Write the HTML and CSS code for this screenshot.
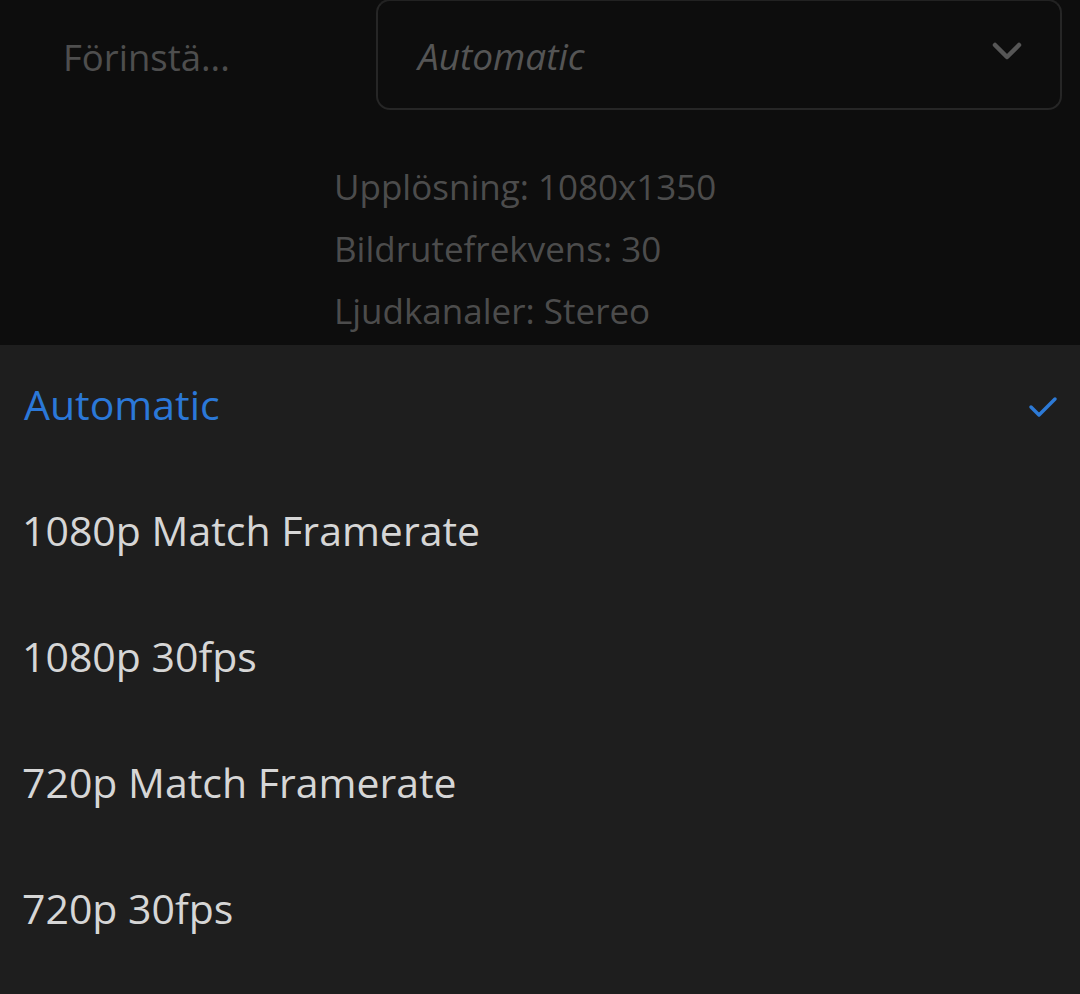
FILE: index.html
```html
<!DOCTYPE html>
<html lang="sv">
<head>
<meta charset="utf-8">
<link rel="stylesheet" href="styles.css">
</head>
<body>
<div class="screen">
  <section class="top">
    <div class="preset-row">
      <div class="preset-label">Förinstä...</div>
      <div class="select">
        <span class="select-value">Automatic</span>
        <svg class="chevron" width="30" height="20" viewBox="0 0 30 20"><path d="M3 3 L15 15 L27 3" fill="none" stroke="#565656" stroke-width="4.5" stroke-linecap="round" stroke-linejoin="round"/></svg>
      </div>
    </div>
    <div class="info">
      <div class="info-line">Upplösning: 1080x1350</div>
      <div class="info-line">Bildrutefrekvens: 30</div>
      <div class="info-line">Ljudkanaler: Stereo</div>
    </div>
  </section>
  <section class="sheet">
    <div class="option selected">
      <span>Automatic</span>
      <svg class="check" width="30" height="24" viewBox="0 0 30 24"><path d="M3 12 L11 20 L27 4" fill="none" stroke="#2d7ad6" stroke-width="3.5" stroke-linecap="round" stroke-linejoin="round"/></svg>
    </div>
    <div class="option"><span>1080p Match Framerate</span></div>
    <div class="option"><span>1080p 30fps</span></div>
    <div class="option"><span>720p Match Framerate</span></div>
    <div class="option"><span>720p 30fps</span></div>
  </section>
</div>
</body>
</html>
```

FILE: styles.css
```css
* { box-sizing: border-box; }
html, body { margin: 0; padding: 0; }
body {
  width: 1080px;
  height: 994px;
  overflow: hidden;
  background: #1e1e1e;
  font-family: "Open Sans", "Noto Sans", sans-serif;
}
.screen { display: flex; flex-direction: column; height: 994px; }
.top {
  background: #0d0d0d;
  height: 345px;
  flex: none;
}
.preset-row {
  display: flex;
  align-items: flex-start;
}
.preset-label {
  width: 376px;
  padding-left: 63px;
  padding-top: 29px;
  font-size: 36.5px;
  color: #4e4e4e;
  line-height: 56px;
}
.select {
  width: 686px;
  height: 111px;
  border: 2px solid #262626;
  border-top-color: #222;
  border-radius: 14px;
  margin-top: -1px;
  display: flex;
  align-items: center;
  justify-content: space-between;
  padding: 0 38px 0 40px;
}
.select-value {
  font-style: italic;
  font-size: 37px;
  color: #555;
  margin-top: 2px;
}
.chevron { display: block; margin-top: -6px; }
.info {
  padding-left: 334px;
  padding-top: 46px;
}
.info-line {
  font-size: 35px;
  line-height: 62px;
  color: #4c4c4c;
}
.sheet {
  flex: 1;
  background: #1e1e1e;
}
.option {
  height: 126px;
  display: flex;
  align-items: center;
  justify-content: space-between;
  padding: 0 22px 8px 22px;
  font-size: 41px;
  color: #d6d6d6;
}
.option.selected { color: #2b78d8; }
.option.selected span { padding-left: 2px; }
.check { display: block; margin-top: 6px; }
```
